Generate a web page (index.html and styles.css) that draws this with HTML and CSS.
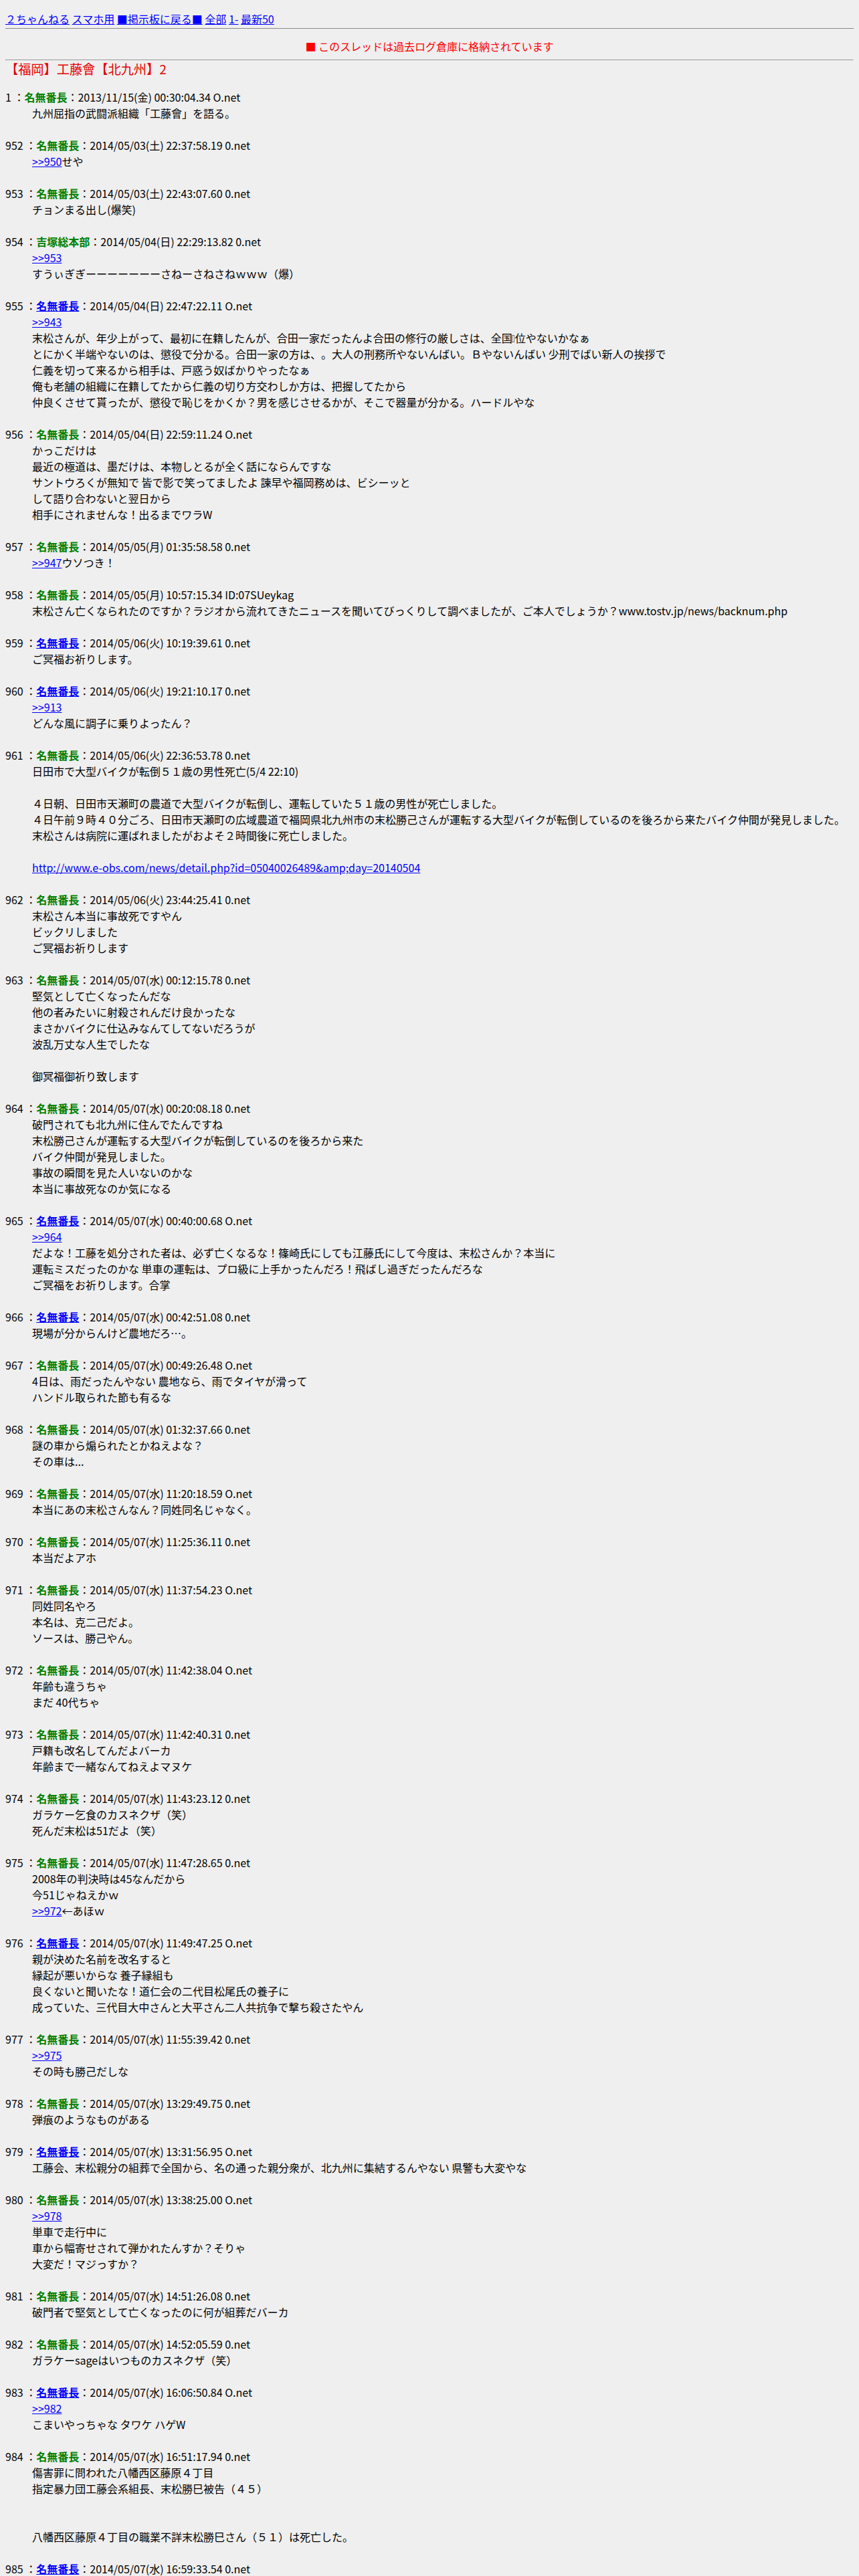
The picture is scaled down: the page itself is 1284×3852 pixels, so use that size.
FILE: index.html
```html
<!DOCTYPE html>
<html lang="ja">
<head>
    <meta charset="UTF-8">
    <title>【福岡】工藤會【北九州】2</title>
    <link rel="stylesheet" href="styles.css">
</head>
<body>
<div class="nav">
<a href="#">２ちゃんねる</a>
<a href="#">スマホ用</a>
<a href="#">■掲示板に戻る■</a>
<a href="#">全部</a>
<a href="#">1-</a>
<a href="#">最新50</a>
</div>
<hr class="nav-line">
<div class="notice">■ このスレッドは過去ログ倉庫に格納されています</div>
<hr>
<h1 class="title">【福岡】工藤會【北九州】2</h1>

<dl class="thread">
<dt>1 ：<b class="name">名無番長</b>：2013/11/15(金) 00:30:04.34 O.net</dt>
<dd>九州屈指の武闘派組織「工藤會」を語る。</dd>

<dt>952 ：<b class="name">名無番長</b>：2014/05/03(土) 22:37:58.19 0.net</dt>
<dd><a href="#">&gt;&gt;950</a>せや</dd>

<dt>953 ：<b class="name">名無番長</b>：2014/05/03(土) 22:43:07.60 0.net</dt>
<dd>チョンまる出し(爆笑)</dd>

<dt>954 ：<b class="name">吉塚総本部</b>：2014/05/04(日) 22:29:13.82 0.net</dt>
<dd><a href="#">&gt;&gt;953</a><br>すうぃぎぎーーーーーーーさねーさねさねｗｗｗ（爆）</dd>

<dt>955 ：<a href="#"><b>名無番長</b></a>：2014/05/04(日) 22:47:22.11 O.net</dt>
<dd><a href="#">&gt;&gt;943</a><br>
末松さんが、年少上がって、最初に在籍したんが、合田一家だったんよ合田の修行の厳しさは、全国<span class="gaiji"></span>位やないかなぁ<br>
とにかく半端やないのは、懲役で分かる。合田一家の方は、。大人の刑務所やないんばい。Ｂやないんばい 少刑でばい新人の挨拶で<br>
仁義を切って来るから相手は、戸惑う奴ばかりやったなぁ<br>
俺も老舗の組織に在籍してたから仁義の切り方交わしか方は、把握してたから<br>
仲良くさせて貰ったが、懲役で恥じをかくか？男を感じさせるかが、そこで器量が分かる。ハードルやな</dd>

<dt>956 ：<b class="name">名無番長</b>：2014/05/04(日) 22:59:11.24 O.net</dt>
<dd>かっこだけは<br>
最近の極道は、墨だけは、本物しとるが全く話にならんですな<br>
サントウろくが無知で 皆で影で笑ってましたよ 諫早や福岡務めは、ビシーッと<br>
して語り合わないと翌日から<br>
相手にされませんな！出るまでワラW</dd>

<dt>957 ：<b class="name">名無番長</b>：2014/05/05(月) 01:35:58.58 0.net</dt>
<dd><a href="#">&gt;&gt;947</a>ウソつき！</dd>

<dt>958 ：<b class="name">名無番長</b>：2014/05/05(月) 10:57:15.34 ID:07SUeykag</dt>
<dd>末松さん亡くなられたのですか？ラジオから流れてきたニュースを聞いてびっくりして調べましたが、ご本人でしょうか？www.tostv.jp/news/backnum.php</dd>

<dt>959 ：<a href="#"><b>名無番長</b></a>：2014/05/06(火) 10:19:39.61 0.net</dt>
<dd>ご冥福お祈りします。</dd>

<dt>960 ：<a href="#"><b>名無番長</b></a>：2014/05/06(火) 19:21:10.17 0.net</dt>
<dd><a href="#">&gt;&gt;913</a><br>どんな風に調子に乗りよったん？</dd>

<dt>961 ：<b class="name">名無番長</b>：2014/05/06(火) 22:36:53.78 0.net</dt>
<dd>日田市で大型バイクが転倒５１歳の男性死亡(5/4 22:10)<br>
<br>
４日朝、日田市天瀬町の農道で大型バイクが転倒し、運転していた５１歳の男性が死亡しました。<br>
４日午前９時４０分ごろ、日田市天瀬町の広域農道で福岡県北九州市の末松勝己さんが運転する大型バイクが転倒しているのを後ろから来たバイク仲間が発見しました。<br>
末松さんは病院に運ばれましたがおよそ２時間後に死亡しました。<br>
<br>
<a href="#">http://www.e-obs.com/news/detail.php?id=05040026489&amp;amp;day=20140504</a></dd>

<dt>962 ：<b class="name">名無番長</b>：2014/05/06(火) 23:44:25.41 0.net</dt>
<dd>末松さん本当に事故死ですやん<br>
ビックリしました<br>
ご冥福お祈りします</dd>

<dt>963 ：<b class="name">名無番長</b>：2014/05/07(水) 00:12:15.78 0.net</dt>
<dd>堅気として亡くなったんだな<br>
他の者みたいに射殺されんだけ良かったな<br>
まさかバイクに仕込みなんてしてないだろうが<br>
波乱万丈な人生でしたな<br>
<br>
御冥福御祈り致します</dd>

<dt>964 ：<b class="name">名無番長</b>：2014/05/07(水) 00:20:08.18 0.net</dt>
<dd>破門されても北九州に住んでたんですね<br>
末松勝己さんが運転する大型バイクが転倒しているのを後ろから来た<br>
バイク仲間が発見しました。<br>
事故の瞬間を見た人いないのかな<br>
本当に事故死なのか気になる</dd>

<dt>965 ：<a href="#"><b>名無番長</b></a>：2014/05/07(水) 00:40:00.68 O.net</dt>
<dd><a href="#">&gt;&gt;964</a><br>
だよな！工藤を処分された者は、必ず亡くなるな！篠崎氏にしても江藤氏にして今度は、末松さんか？本当に<br>
運転ミスだったのかな 単車の運転は、プロ級に上手かったんだろ！飛ばし過ぎだったんだろな<br>
ご冥福をお祈りします。合掌</dd>

<dt>966 ：<a href="#"><b>名無番長</b></a>：2014/05/07(水) 00:42:51.08 0.net</dt>
<dd>現場が分からんけど農地だろ…。</dd>

<dt>967 ：<b class="name">名無番長</b>：2014/05/07(水) 00:49:26.48 O.net</dt>
<dd>4日は、雨だったんやない 農地なら、雨でタイヤが滑って<br>
ハンドル取られた節も有るな</dd>

<dt>968 ：<b class="name">名無番長</b>：2014/05/07(水) 01:32:37.66 0.net</dt>
<dd>謎の車から煽られたとかねえよな？<br>
その車は...</dd>

<dt>969 ：<b class="name">名無番長</b>：2014/05/07(水) 11:20:18.59 O.net</dt>
<dd>本当にあの末松さんなん？同姓同名じゃなく。</dd>

<dt>970 ：<b class="name">名無番長</b>：2014/05/07(水) 11:25:36.11 0.net</dt>
<dd>本当だよアホ</dd>

<dt>971 ：<b class="name">名無番長</b>：2014/05/07(水) 11:37:54.23 O.net</dt>
<dd>同姓同名やろ<br>
本名は、克二己だよ。<br>
ソースは、勝己やん。</dd>

<dt>972 ：<b class="name">名無番長</b>：2014/05/07(水) 11:42:38.04 O.net</dt>
<dd>年齢も違うちゃ<br>
まだ 40代ちゃ</dd>

<dt>973 ：<b class="name">名無番長</b>：2014/05/07(水) 11:42:40.31 0.net</dt>
<dd>戸籍も改名してんだよバーカ<br>
年齢まで一緒なんてねえよマヌケ</dd>

<dt>974 ：<b class="name">名無番長</b>：2014/05/07(水) 11:43:23.12 0.net</dt>
<dd>ガラケー乞食のカスネクザ（笑）<br>
死んだ末松は51だよ（笑）</dd>

<dt>975 ：<b class="name">名無番長</b>：2014/05/07(水) 11:47:28.65 0.net</dt>
<dd>2008年の判決時は45なんだから<br>
今51じゃねえかｗ<br>
<a href="#">&gt;&gt;972</a>←あほｗ</dd>

<dt>976 ：<a href="#"><b>名無番長</b></a>：2014/05/07(水) 11:49:47.25 O.net</dt>
<dd>親が決めた名前を改名すると<br>
縁起が悪いからな 養子縁組も<br>
良くないと聞いたな！道仁会の二代目松尾氏の養子に<br>
成っていた、三代目大中さんと大平さん二人共抗争で撃ち殺さたやん</dd>

<dt>977 ：<b class="name">名無番長</b>：2014/05/07(水) 11:55:39.42 0.net</dt>
<dd><a href="#">&gt;&gt;975</a><br>その時も勝己だしな</dd>

<dt>978 ：<b class="name">名無番長</b>：2014/05/07(水) 13:29:49.75 0.net</dt>
<dd>弾痕のようなものがある</dd>

<dt>979 ：<a href="#"><b>名無番長</b></a>：2014/05/07(水) 13:31:56.95 O.net</dt>
<dd>工藤会、末松親分の組葬で全国から、名の通った親分衆が、北九州に集結するんやない 県警も大変やな</dd>

<dt>980 ：<b class="name">名無番長</b>：2014/05/07(水) 13:38:25.00 O.net</dt>
<dd><a href="#">&gt;&gt;978</a><br>
単車で走行中に<br>
車から幅寄せされて弾かれたんすか？そりゃ<br>
大変だ！マジっすか？</dd>

<dt>981 ：<b class="name">名無番長</b>：2014/05/07(水) 14:51:26.08 0.net</dt>
<dd>破門者で堅気として亡くなったのに何が組葬だバーカ</dd>

<dt>982 ：<b class="name">名無番長</b>：2014/05/07(水) 14:52:05.59 0.net</dt>
<dd>ガラケーsageはいつものカスネクザ（笑）</dd>

<dt>983 ：<a href="#"><b>名無番長</b></a>：2014/05/07(水) 16:06:50.84 O.net</dt>
<dd><a href="#">&gt;&gt;982</a><br>こまいやっちゃな タワケ ハゲW</dd>

<dt>984 ：<b class="name">名無番長</b>：2014/05/07(水) 16:51:17.94 0.net</dt>
<dd>傷害罪に問われた八幡西区藤原４丁目<br>
指定暴力団工藤会系組長、末松勝巳被告（４５）<br>
<br>
<br>
八幡西区藤原４丁目の職業不詳末松勝巳さん（５１）は死亡した。</dd>

<dt>985 ：<a href="#"><b>名無番長</b></a>：2014/05/07(水) 16:59:33.54 0.net</dt>
</dl>
</body>
</html>
```

FILE: styles.css
```css
html {
    overflow: hidden;
}
body {
    box-sizing: border-box;
    height: 3852px;
    margin: 0;
    padding: 16px 8px 0;
    overflow: hidden;
    background-color: #efefef;
    color: #000;
    font-family: "Noto Sans CJK JP", sans-serif;
    font-size: 16px;
    line-height: 24px;
    text-spacing-trim: space-all;
}
a {
    color: #0000ff;
}
.nav-line {
    height: 1px;
    margin: 2px 0 14px;
    border: 0;
    background-color: #888;
}
.notice {
    text-align: center;
    color: #ff0000;
}
.title {
    margin: -.5em 0 0;
    font-size: larger;
    font-weight: normal;
    line-height: 28px;
    color: #e60000;
}
.thread {
    margin: 16px 0 0;
}
.thread dd {
    margin: 0 0 24px 40px;
}
.name {
    color: #008000;
}
/* 表示できない文字 */
.gaiji {
    display: inline-block;
    box-sizing: border-box;
    width: 4px;
    height: 11px;
    margin: 0 1px 0 -1px;
    border: 1px solid #777;
}
```
